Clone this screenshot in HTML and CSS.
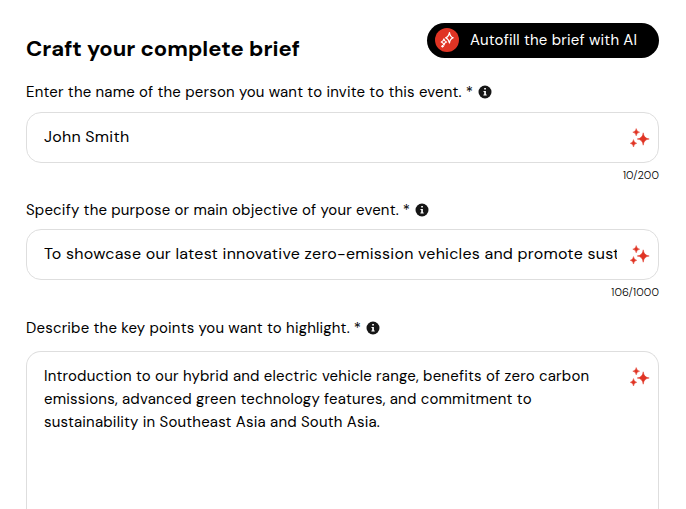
FILE: index.html
```html
<!doctype html>
<html lang="en">
<head>
    <meta charset="utf-8">
    <title>Event Brief</title>
    <link rel="stylesheet" href="styles.css">
</head>
<body>
    <!-- Shared icons -->
    <svg class="icon-defs" width="0" height="0">
        <symbol id="icon-info" viewBox="0 0 14 14">
            <circle cx="7" cy="7" r="6.5" fill="#161616"/>
            <path d="M6.2 3h1.7v1.6H6.2zM5.5 6h2.4v3.5h.8v1H5.4v-1h.8V6.9h-.7z" fill="#fff"/>
        </symbol>
        <symbol id="icon-sparkles" viewBox="0 0 20 20">
            <path d="M13.2 4.8Q13.8 10.4 19.2 11Q13.8 11.6 13.2 17.2Q12.6 11.6 7.2 11Q12.6 10.4 13.2 4.8zM6.2.6Q6.6 3.8 9.6 4.2Q6.6 4.6 6.2 7.8Q5.8 4.6 2.8 4.2Q5.8 3.8 6.2.6zM3.5 11.6Q3.9 14.9 6.7 15.3Q3.9 15.7 3.5 19Q3.1 15.7.3 15.3Q3.1 14.9 3.5 11.6z" fill="#e03424" stroke="#e03424" stroke-width=".5"/>
        </symbol>
    </svg>

    <div class="brief">
        <div class="brief-header">
            <h1>Craft your complete brief</h1>
            <button class="autofill" type="button">
                <span class="autofill-icon">
                    <svg width="24" height="24" viewBox="0 0 24 24" fill="none" stroke="#fff" stroke-width="1.2" stroke-linejoin="round">
                        <path d="M14.5 4.5Q15 8.7 18.2 9.8Q15 11 14.5 15Q13.6 11 10.6 9.8Q13.6 8.7 14.5 4.5z"/>
                        <path d="M8.9 10.8Q9.2 13.4 11.6 14Q9.2 14.7 8.9 17.2Q8.5 14.7 6.2 14Q8.5 13.4 8.9 10.8z"/>
                        <path d="M7.5 17v2.6M6.2 18.3h2.6"/>
                    </svg>
                </span>
                <span class="autofill-text">Autofill the brief with AI</span>
            </button>
        </div>

        <form>
            <div class="field">
                <label for="name"><span>Enter the name of the person you want to invite to this event.</span> <span class="required">*</span> <svg class="info"><use href="#icon-info"/></svg></label>
                <div class="control">
                    <input type="text" id="name" value="John Smith">
                    <svg class="sparkles"><use href="#icon-sparkles"/></svg>
                </div>
                <div class="counter">10/200</div>
            </div>

            <div class="field field-purpose">
                <label for="purpose"><span>Specify the purpose or main objective of your event.</span> <span class="required">*</span> <svg class="info"><use href="#icon-info"/></svg></label>
                <div class="control">
                    <input type="text" id="purpose" value="To showcase our latest innovative zero-emission vehicles and promote sustainable driving across Asia.">
                    <svg class="sparkles"><use href="#icon-sparkles"/></svg>
                </div>
                <div class="counter">106/1000</div>
            </div>

            <div class="field field-points">
                <label for="points"><span>Describe the key points you want to highlight.</span> <span class="required">*</span> <svg class="info"><use href="#icon-info"/></svg></label>
                <div class="control control-area">
                    <textarea id="points">Introduction to our hybrid and electric vehicle range, benefits of zero carbon
emissions, advanced green technology features, and commitment to
sustainability in Southeast Asia and South Asia.</textarea>
                    <svg class="sparkles"><use href="#icon-sparkles"/></svg>
                </div>
            </div>
        </form>
    </div>
</body>
</html>
```
FILE: styles.css
```css
* {
    box-sizing: border-box;
}
body {
    margin: 0;
    height: 100vh;
    overflow: hidden;
    background-color: #fff;
    color: #000;
    font-family: "DM Sans", Inter, sans-serif;
    font-optical-sizing: none;
}
.icon-defs {
    position: absolute;
}
.brief {
    display: flex;
    flex-direction: column;
    height: 100vh;
    padding: 23px 27px 0 26px;
}
.brief-header {
    display: flex;
    flex: none;
    justify-content: space-between;
    height: 35px;
    margin-bottom: 24px;
}
h1 {
    margin: 11px 0 0;
    font-size: 22px;
    font-weight: 700;
    line-height: 30px;
    white-space: nowrap;
}
.autofill {
    display: flex;
    align-items: center;
    gap: 11px;
    width: 232px;
    height: 35px;
    padding: 0 0 1px 8px;
    border: none;
    border-radius: 18px;
    background-color: #000;
    color: #fff;
    font-family: inherit;
    font-size: 15px;
    letter-spacing: 0.18px;
    white-space: nowrap;
    cursor: pointer;
}
.autofill-icon {
    display: flex;
    width: 24px;
    height: 24px;
    border-radius: 50%;
    background-color: #e03424;
}
form {
    display: flex;
    flex: 1;
    flex-direction: column;
    min-height: 0;
}
.field {
    margin-bottom: 17px;
}
label {
    display: flex;
    align-items: center;
    height: 20px;
    margin-bottom: 10px;
    font-size: 15px;
    letter-spacing: 0.17px;
    white-space: nowrap;
}
.required {
    margin: 0 5px 0 4px;
}
.info {
    width: 14px;
    height: 14px;
    margin-bottom: 1px;
}
.control {
    display: flex;
    align-items: center;
    height: 51px;
    padding: 0 9px 0 17px;
    border: 1px solid #dedede;
    border-radius: 15px;
}
.control input,
.control textarea {
    flex: none;
    width: 573px;
    margin: 0 13px 0 0;
    padding: 0;
    border: none;
    outline: none;
    background: none;
    color: #000;
    font-family: inherit;
    font-size: 16px;
    letter-spacing: 0.24px;
}
.control input {
    padding-bottom: 3px;
}
.sparkles {
    flex: none;
    width: 20px;
    height: 20px;
}
.counter {
    margin-top: 4px;
    font-size: 11px;
    font-weight: 300;
    letter-spacing: 0.1px;
    line-height: 16px;
    text-align: right;
}
.field-purpose label {
    margin-bottom: 9px;
}
.field-purpose {
    margin-bottom: 18px;
}
.field-points {
    display: flex;
    flex: 1;
    flex-direction: column;
    min-height: 0;
    margin-bottom: 0;
}
.field-points label {
    margin-bottom: 13px;
}
/* The text area runs to the bottom of the view */
.control-area {
    flex: 1;
    align-items: flex-start;
    height: auto;
    padding-top: 13px;
    border-bottom: none;
    border-radius: 15px 15px 0 0;
}
.control-area .sparkles {
    margin-top: 2px;
}
.control textarea {
    height: 100px;
    font-size: 15px;
    letter-spacing: 0.19px;
    line-height: 23px;
    white-space: pre;
    overflow: hidden;
    resize: none;
}
```
